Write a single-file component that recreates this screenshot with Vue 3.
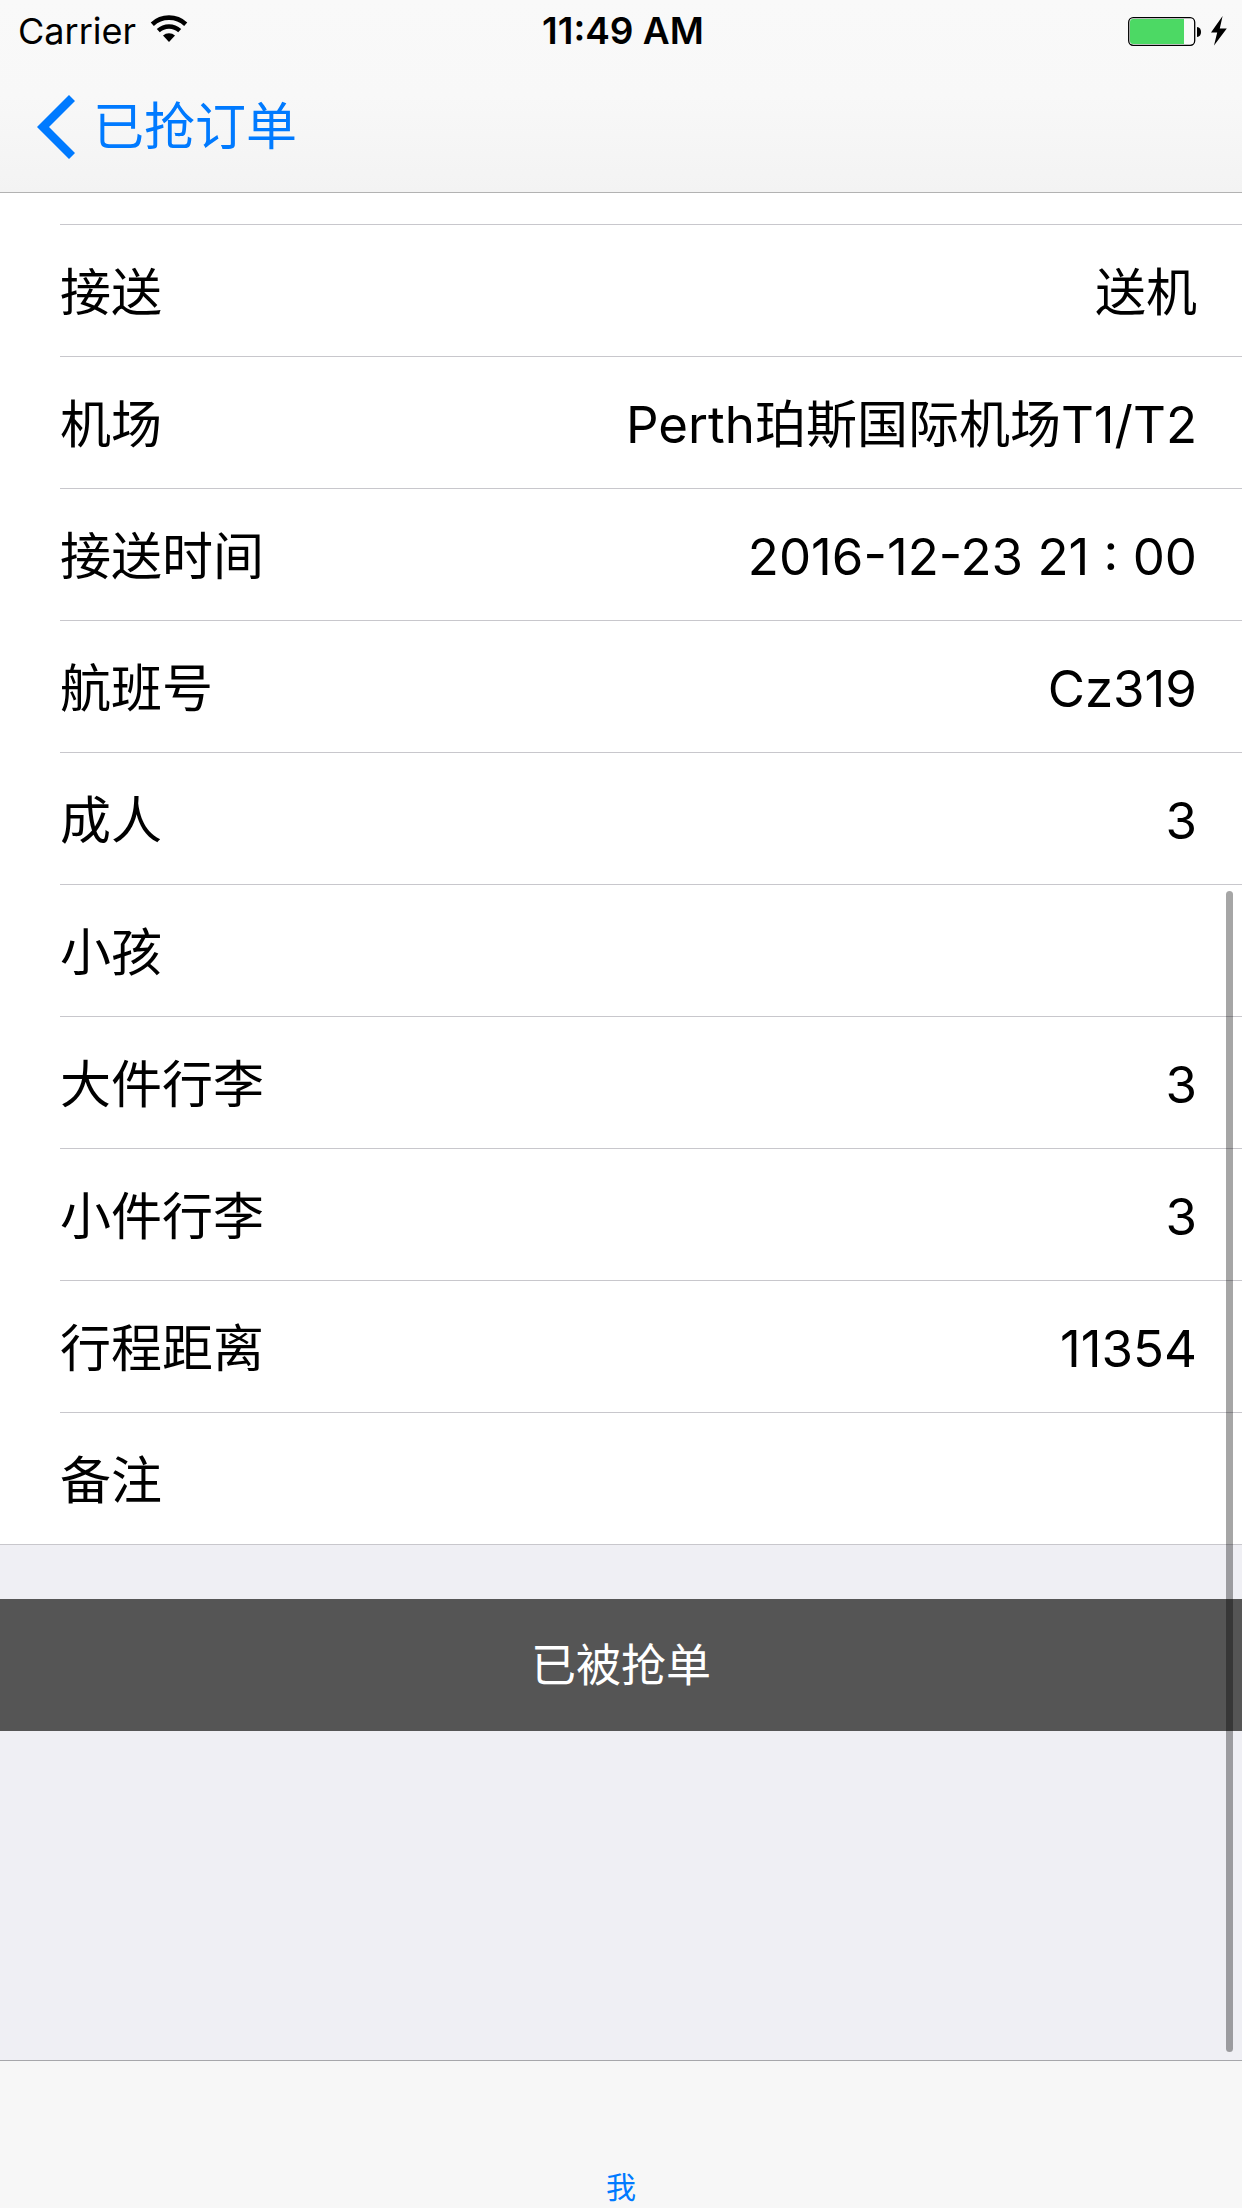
<script setup>
const rows = [
  { label: '接送', value: '送机' },
  { label: '机场', value: 'Perth珀斯国际机场T1/T2' },
  { label: '接送时间', value: '2016-12-23 21 : 00' },
  { label: '航班号', value: 'Cz319' },
  { label: '成人', value: '3' },
  { label: '小孩', value: '' },
  { label: '大件行李', value: '3' },
  { label: '小件行李', value: '3' },
  { label: '行程距离', value: '11354' },
  { label: '备注', value: '' },
]
</script>

<template>
  <div class="screen">
    <header class="header">
      <div class="status">
        <div class="status-left">
          <span>Carrier</span>
          <svg class="wifi" width="38" height="28" viewBox="0 0 38 28" aria-hidden="true">
            <path d="M2.3 9.2a24.5 24.5 0 0 1 33.4 0" fill="none" stroke="#000" stroke-width="4.6" />
            <path d="M8.3 15.6a15.8 15.8 0 0 1 21.4 0" fill="none" stroke="#000" stroke-width="4.4" />
            <path d="M13 20.6a8.8 8.8 0 0 1 12 0L19 27z" />
          </svg>
        </div>
        <div class="time">11:49 AM</div>
        <div class="status-right">
          <svg width="100" height="32" viewBox="0 0 100 32" aria-hidden="true">
            <rect x="0.7" y="2.7" width="66" height="27.6" rx="4.5" fill="#fafafa" stroke="#000" stroke-width="1.3" />
            <path d="M5 4h51v25H5a3 3 0 0 1-3-3V7a3 3 0 0 1 3-3z" fill="#4cd964" />
            <path d="M69 12c5.400 0 5.400 10 0 10z" />
            <path d="M94.600 1L83 17.400h6.200L86 30.500 98.800 13.400h-7z" />
          </svg>
        </div>
      </div>
      <nav class="nav">
        <a class="back" href="#">
          <svg width="38" height="64" viewBox="0 0 38 64" aria-hidden="true">
            <path d="M35 3L6 32l29 29" fill="none" stroke="#007aff" stroke-width="8.500" />
          </svg>
          <span>已抢订单</span>
        </a>
      </nav>
    </header>

    <main class="content">
      <dl class="list">
        <div v-for="row in rows" :key="row.label" class="row">
          <dt>{{ row.label }}</dt>
          <dd>{{ row.value }}</dd>
        </div>
      </dl>
      <button class="action" type="button">已被抢单</button>
      <div class="scrollbar" aria-hidden="true"></div>
    </main>

    <footer class="tabs">
      <a class="tab" href="#">我</a>
    </footer>
  </div>
</template>

<style>
body {
  margin: 0;
}
</style>

<style scoped>
.screen {
  display: flex;
  flex-direction: column;
  min-height: 100vh;
  background: #efeff4;
  color: #000;
  font-family: Inter, "Noto Sans CJK SC", sans-serif;
  font-size: 51px;
  line-height: 72px;
}

.header {
  background: linear-gradient(#f9f9f9, #f8f8f8 50%, #f3f3f3);
  border-bottom: 1px solid #b2b2b2;
}

.status {
  display: grid;
  grid-template-columns: 1fr auto 1fr;
  align-items: center;
  box-sizing: border-box;
  height: 60px;
  padding: 2px 14px 0 18px;
  font-size: 36px;
  line-height: 58px;
}

.status-left {
  display: flex;
  align-items: center;
  gap: 14px;
}

.wifi {
  margin-bottom: 4px;
}

.time {
  font-size: 37px;
  font-weight: 600;
}

.status-right {
  display: flex;
  justify-content: flex-end;
}

.nav {
  display: flex;
  align-items: center;
  box-sizing: border-box;
  height: 132px;
  padding: 2px 37px 0;
}

.back {
  display: flex;
  align-items: center;
  gap: 18px;
  color: #007aff;
  text-decoration: none;
}

.content {
  position: relative;
  flex: 1;
}

.list {
  margin: 0;
  padding: 31px 0 0 60px;
  background: #fff;
  border-bottom: 1px solid #c8c7cc;
}

.row {
  display: flex;
  align-items: center;
  justify-content: space-between;
  box-sizing: border-box;
  height: 132px;
  padding: 4px 45px 0 0;
  border-top: 1px solid #c8c7cc;
}

dt,
dd {
  margin: 0;
}

.action {
  display: block;
  box-sizing: border-box;
  width: 100%;
  height: 132px;
  margin: 54px 0 0;
  padding: 2px 0 0;
  border: 0;
  background: #555;
  color: #fff;
  font-family: inherit;
  font-size: 45px;
  line-height: 130px;
}

.scrollbar {
  position: absolute;
  top: 698px;
  right: 9px;
  bottom: 8px;
  width: 7px;
  border-radius: 4px;
  background: rgba(0, 0, 0, 0.35);
}

.tabs {
  display: flex;
  align-items: flex-end;
  justify-content: center;
  box-sizing: border-box;
  height: 148px;
  border-top: 1px solid #a7a7ab;
  background: #f7f7f7;
}

.tab {
  color: #007aff;
  font-size: 30px;
  line-height: 42px;
  text-decoration: none;
}
</style>
